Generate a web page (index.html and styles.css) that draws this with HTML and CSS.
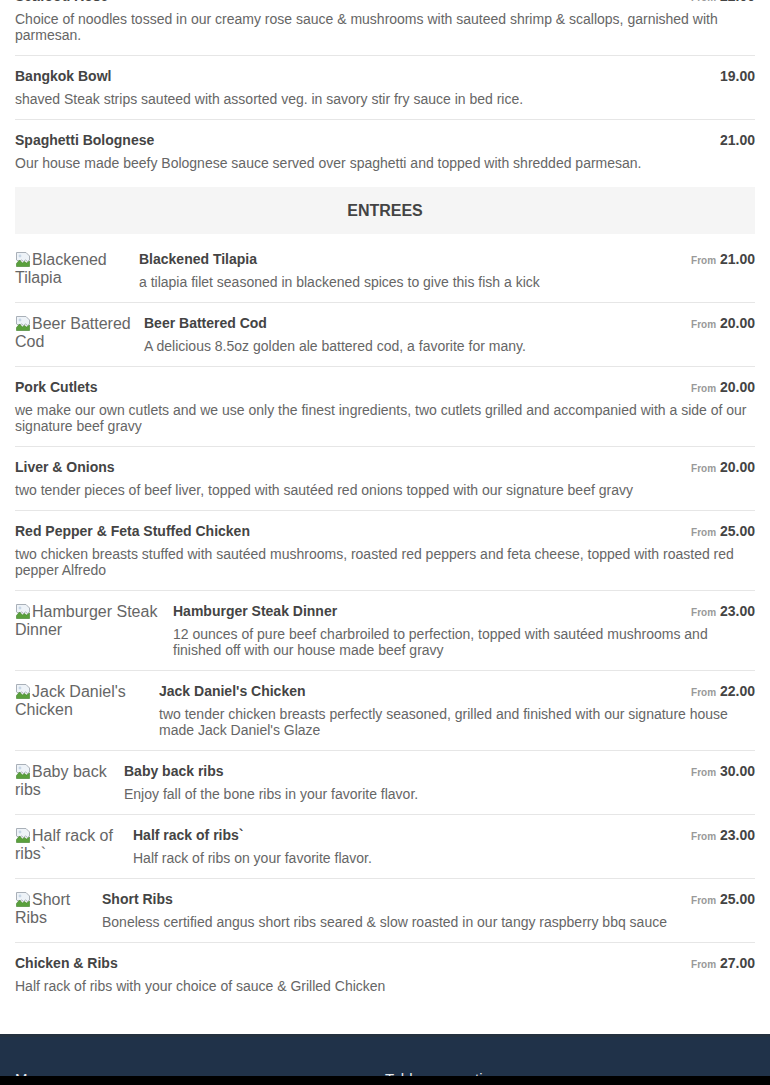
FILE: index.html
```html
<!DOCTYPE html>
<html>
<head>
<meta charset="utf-8">
<link rel="stylesheet" href="styles.css">
</head>
<body>
<main class="menu">
  <div class="item first">
    <div class="body">
      <div class="head"><span class="name">Seafood Rosé</span><span class="price"><small>From</small> 22.00</span></div>
      <p class="desc">Choice of noodles tossed in our creamy rose sauce &amp; mushrooms with sauteed shrimp &amp; scallops, garnished with parmesan.</p>
    </div>
  </div>
  <div class="item">
    <div class="body">
      <div class="head"><span class="name">Bangkok Bowl</span><span class="price">19.00</span></div>
      <p class="desc">shaved Steak strips sauteed with assorted veg. in savory stir fry sauce in bed rice.</p>
    </div>
  </div>
  <div class="item">
    <div class="body">
      <div class="head"><span class="name">Spaghetti Bolognese</span><span class="price">21.00</span></div>
      <p class="desc">Our house made beefy Bolognese sauce served over spaghetti and topped with shredded parmesan.</p>
    </div>
  </div>

  <h2 class="section">ENTREES</h2>

  <div class="item first">
    <div class="thumb t-blackened"><svg class="broken" viewBox="0 0 16 16"><path d="M1.5 1.5h9.5l3.5 3.5v4l-2 1.5-2-1.5-2 1.5-2-1.5-2 1.5-3-1.5z" fill="#eef3f8" stroke="#a9b0b8"/><path d="M1.5 15.5v-3l3-3.5 3 3 2-1.5 2 1.5 3-2v5.5z" fill="#5aa03c" stroke="#3e7e2a" stroke-width=".6"/><circle cx="5" cy="5" r="1.4" fill="#c7d6e6"/></svg>Blackened Tilapia</div>
    <div class="body">
      <div class="head"><span class="name">Blackened Tilapia</span><span class="price"><small>From</small> 21.00</span></div>
      <p class="desc">a tilapia filet seasoned in blackened spices to give this fish a kick</p>
    </div>
  </div>
  <div class="item">
    <div class="thumb t-beer"><svg class="broken" viewBox="0 0 16 16"><path d="M1.5 1.5h9.5l3.5 3.5v4l-2 1.5-2-1.5-2 1.5-2-1.5-2 1.5-3-1.5z" fill="#eef3f8" stroke="#a9b0b8"/><path d="M1.5 15.5v-3l3-3.5 3 3 2-1.5 2 1.5 3-2v5.5z" fill="#5aa03c" stroke="#3e7e2a" stroke-width=".6"/><circle cx="5" cy="5" r="1.4" fill="#c7d6e6"/></svg>Beer Battered Cod</div>
    <div class="body">
      <div class="head"><span class="name">Beer Battered Cod</span><span class="price"><small>From</small> 20.00</span></div>
      <p class="desc">A delicious 8.5oz golden ale battered cod, a favorite for many.</p>
    </div>
  </div>
  <div class="item">
    <div class="body">
      <div class="head"><span class="name">Pork Cutlets</span><span class="price"><small>From</small> 20.00</span></div>
      <p class="desc">we make our own cutlets and we use only the finest ingredients, two cutlets grilled and accompanied with a side of our signature beef gravy</p>
    </div>
  </div>
  <div class="item">
    <div class="body">
      <div class="head"><span class="name">Liver &amp; Onions</span><span class="price"><small>From</small> 20.00</span></div>
      <p class="desc">two tender pieces of beef liver, topped with sautéed red onions topped with our signature beef gravy</p>
    </div>
  </div>
  <div class="item">
    <div class="body">
      <div class="head"><span class="name">Red Pepper &amp; Feta Stuffed Chicken</span><span class="price"><small>From</small> 25.00</span></div>
      <p class="desc">two chicken breasts stuffed with sautéed mushrooms, roasted red peppers and feta cheese, topped with roasted red pepper Alfredo</p>
    </div>
  </div>
  <div class="item">
    <div class="thumb t-hamburger"><svg class="broken" viewBox="0 0 16 16"><path d="M1.5 1.5h9.5l3.5 3.5v4l-2 1.5-2-1.5-2 1.5-2-1.5-2 1.5-3-1.5z" fill="#eef3f8" stroke="#a9b0b8"/><path d="M1.5 15.5v-3l3-3.5 3 3 2-1.5 2 1.5 3-2v5.5z" fill="#5aa03c" stroke="#3e7e2a" stroke-width=".6"/><circle cx="5" cy="5" r="1.4" fill="#c7d6e6"/></svg>Hamburger Steak Dinner</div>
    <div class="body">
      <div class="head"><span class="name">Hamburger Steak Dinner</span><span class="price"><small>From</small> 23.00</span></div>
      <p class="desc">12 ounces of pure beef charbroiled to perfection, topped with sautéed mushrooms and finished off with our house made beef gravy</p>
    </div>
  </div>
  <div class="item">
    <div class="thumb t-jack"><svg class="broken" viewBox="0 0 16 16"><path d="M1.5 1.5h9.5l3.5 3.5v4l-2 1.5-2-1.5-2 1.5-2-1.5-2 1.5-3-1.5z" fill="#eef3f8" stroke="#a9b0b8"/><path d="M1.5 15.5v-3l3-3.5 3 3 2-1.5 2 1.5 3-2v5.5z" fill="#5aa03c" stroke="#3e7e2a" stroke-width=".6"/><circle cx="5" cy="5" r="1.4" fill="#c7d6e6"/></svg>Jack Daniel's Chicken</div>
    <div class="body">
      <div class="head"><span class="name">Jack Daniel's Chicken</span><span class="price"><small>From</small> 22.00</span></div>
      <p class="desc">two tender chicken breasts perfectly seasoned, grilled and finished with our signature house made Jack Daniel's Glaze</p>
    </div>
  </div>
  <div class="item">
    <div class="thumb t-baby"><svg class="broken" viewBox="0 0 16 16"><path d="M1.5 1.5h9.5l3.5 3.5v4l-2 1.5-2-1.5-2 1.5-2-1.5-2 1.5-3-1.5z" fill="#eef3f8" stroke="#a9b0b8"/><path d="M1.5 15.5v-3l3-3.5 3 3 2-1.5 2 1.5 3-2v5.5z" fill="#5aa03c" stroke="#3e7e2a" stroke-width=".6"/><circle cx="5" cy="5" r="1.4" fill="#c7d6e6"/></svg>Baby back ribs</div>
    <div class="body">
      <div class="head"><span class="name">Baby back ribs</span><span class="price"><small>From</small> 30.00</span></div>
      <p class="desc">Enjoy fall of the bone ribs in your favorite flavor.</p>
    </div>
  </div>
  <div class="item">
    <div class="thumb t-half"><svg class="broken" viewBox="0 0 16 16"><path d="M1.5 1.5h9.5l3.5 3.5v4l-2 1.5-2-1.5-2 1.5-2-1.5-2 1.5-3-1.5z" fill="#eef3f8" stroke="#a9b0b8"/><path d="M1.5 15.5v-3l3-3.5 3 3 2-1.5 2 1.5 3-2v5.5z" fill="#5aa03c" stroke="#3e7e2a" stroke-width=".6"/><circle cx="5" cy="5" r="1.4" fill="#c7d6e6"/></svg>Half rack of ribs`</div>
    <div class="body">
      <div class="head"><span class="name">Half rack of ribs`</span><span class="price"><small>From</small> 23.00</span></div>
      <p class="desc">Half rack of ribs on your favorite flavor.</p>
    </div>
  </div>
  <div class="item">
    <div class="thumb t-short"><svg class="broken" viewBox="0 0 16 16"><path d="M1.5 1.5h9.5l3.5 3.5v4l-2 1.5-2-1.5-2 1.5-2-1.5-2 1.5-3-1.5z" fill="#eef3f8" stroke="#a9b0b8"/><path d="M1.5 15.5v-3l3-3.5 3 3 2-1.5 2 1.5 3-2v5.5z" fill="#5aa03c" stroke="#3e7e2a" stroke-width=".6"/><circle cx="5" cy="5" r="1.4" fill="#c7d6e6"/></svg>Short Ribs</div>
    <div class="body">
      <div class="head"><span class="name">Short Ribs</span><span class="price"><small>From</small> 25.00</span></div>
      <p class="desc">Boneless certified angus short ribs seared &amp; slow roasted in our tangy raspberry bbq sauce</p>
    </div>
  </div>
  <div class="item">
    <div class="body">
      <div class="head"><span class="name">Chicken &amp; Ribs</span><span class="price"><small>From</small> 27.00</span></div>
      <p class="desc">Half rack of ribs with your choice of sauce &amp; Grilled Chicken</p>
    </div>
  </div>
</main>

<footer class="footer">
  <div class="footer-col">Menu</div>
  <div class="footer-col">Table reservation</div>
</footer>
<div class="bottom-bar"></div>
</body>
</html>
```

FILE: styles.css
```css
html, body {
  margin: 0;
  padding: 0;
  background: #fff;
}
body {
  font-family: "Liberation Sans", Arial, sans-serif;
  color: #666;
  overflow: hidden;
}
.menu {
  margin: -24px 15px 28px;
}
.item {
  display: flex;
  border-top: 1px solid #e6e6e6;
  padding: 10px 0 12px;
}
.item.first {
  border-top: 0;
}
.thumb {
  flex: none;
  margin-right: 10px;
  margin-top: 2px;
  font-size: 16px;
  line-height: 18px;
  color: #666;
}
.broken {
  width: 16px;
  height: 16px;
  vertical-align: -2px;
  margin-right: 1px;
}
.t-blackened { width: 114px; }
.t-beer { width: 119px; }
.t-hamburger { width: 148px; }
.t-jack { width: 134px; }
.t-baby { width: 99px; }
.t-half { width: 108px; }
.t-short { width: 77px; }
.body {
  flex: 1;
  min-width: 0;
}
.head {
  display: flex;
  justify-content: space-between;
  align-items: baseline;
  height: 20px;
  font-size: 14px;
  line-height: 20px;
}
.name {
  font-size: 14px;
  font-weight: bold;
  color: #444;
}
.price {
  font-size: 14px;
  font-weight: bold;
  color: #444;
  white-space: nowrap;
}
.price small {
  font-size: 10px;
  line-height: 0;
  color: #999;
}
.desc {
  margin: 5px 0 0;
  font-size: 14px;
  line-height: 16px;
  color: #666;
}
.section {
  margin: 4px 0 5px;
  background: #f5f5f5;
  height: 47px;
  line-height: 47px;
  text-align: center;
  font-size: 16px;
  font-weight: bold;
  color: #444;
}
.footer {
  background: #203249;
  border-top: 3px solid #243140;
  display: grid;
  grid-template-columns: 1fr 1fr;
  padding: 33px 15px 40px;
  color: #e6e9ee;
  font-size: 15px;
  line-height: 18px;
}
.bottom-bar {
  position: fixed;
  left: 0;
  right: 0;
  bottom: 0;
  height: 9px;
  background: #000;
}
```
